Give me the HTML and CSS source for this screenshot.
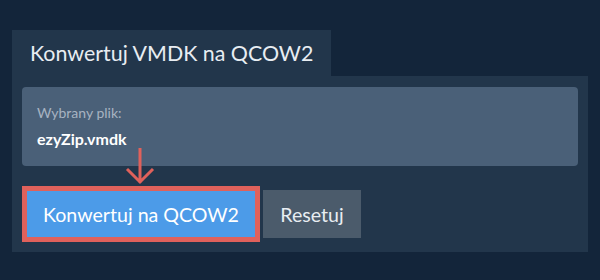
FILE: index.html
```html
<!DOCTYPE html>
<html lang="pl">
<head>
  <meta charset="UTF-8" />
  <title>Konwertuj VMDK na QCOW2</title>
  <link rel="stylesheet" href="styles.css">
</head>
<body>
  <div class="wrap">
    <div class="tab">Konwertuj VMDK na QCOW2</div>
    <div class="panel">
      <div class="file-box">
        <div class="file-label">Wybrany plik:</div>
        <div class="file-name">ezyZip.vmdk</div>
      </div>
      <div class="actions">
        <button class="btn btn-convert">Konwertuj na QCOW2</button>
        <button class="btn btn-reset">Resetuj</button>
      </div>
      <svg class="arrow" width="32" height="40" viewBox="0 0 32 40">
        <path d="M16 0 V35 M3 21 L16 34 L29 21" fill="none" stroke="#e0615b" stroke-width="3" />
      </svg>
    </div>
  </div>
</body>
</html>
```

FILE: styles.css
```css
body {
  margin: 0;
  background-color: #13253a;
  font-family: Lato, "Open Sans", sans-serif;
}
.wrap {
  padding: 30px 12px 0;
}
.tab {
  background-color: #22364b;
  color: #e8edf2;
  font-size: 21.4px;
  line-height: 46px;
  height: 46px;
  padding: 0 18px;
  width: 319px;
  box-sizing: border-box;
  white-space: nowrap;
}
.panel {
  position: relative;
  background-color: #22364b;
  padding: 11px 10px 10px;
}
.file-box {
  background-color: #4a6078;
  border-radius: 4px;
  height: 79px;
  box-sizing: border-box;
  padding: 18px 15px 0;
}
.file-label {
  color: #a7b3c1;
  font-size: 14px;
  line-height: 16px;
}
.file-name {
  color: #ffffff;
  font-size: 16px;
  font-weight: bold;
  margin-top: 8px;
}
.actions {
  display: flex;
  align-items: center;
  gap: 3px;
  margin-top: 20px;
}
.btn {
  font-family: Lato, "Open Sans", sans-serif;
  font-size: 19.6px;
  color: #ffffff;
  border: none;
  cursor: pointer;
}
.btn-convert {
  background-color: #4c9be8;
  border: 5px solid #e0615b;
  width: 238px;
  height: 56px;
}
.btn-reset {
  background-color: #4b5b6b;
  width: 98px;
  height: 48px;
  color: #e8edf2;
}
.arrow {
  position: absolute;
  left: 112px;
  top: 72px;
}
```
